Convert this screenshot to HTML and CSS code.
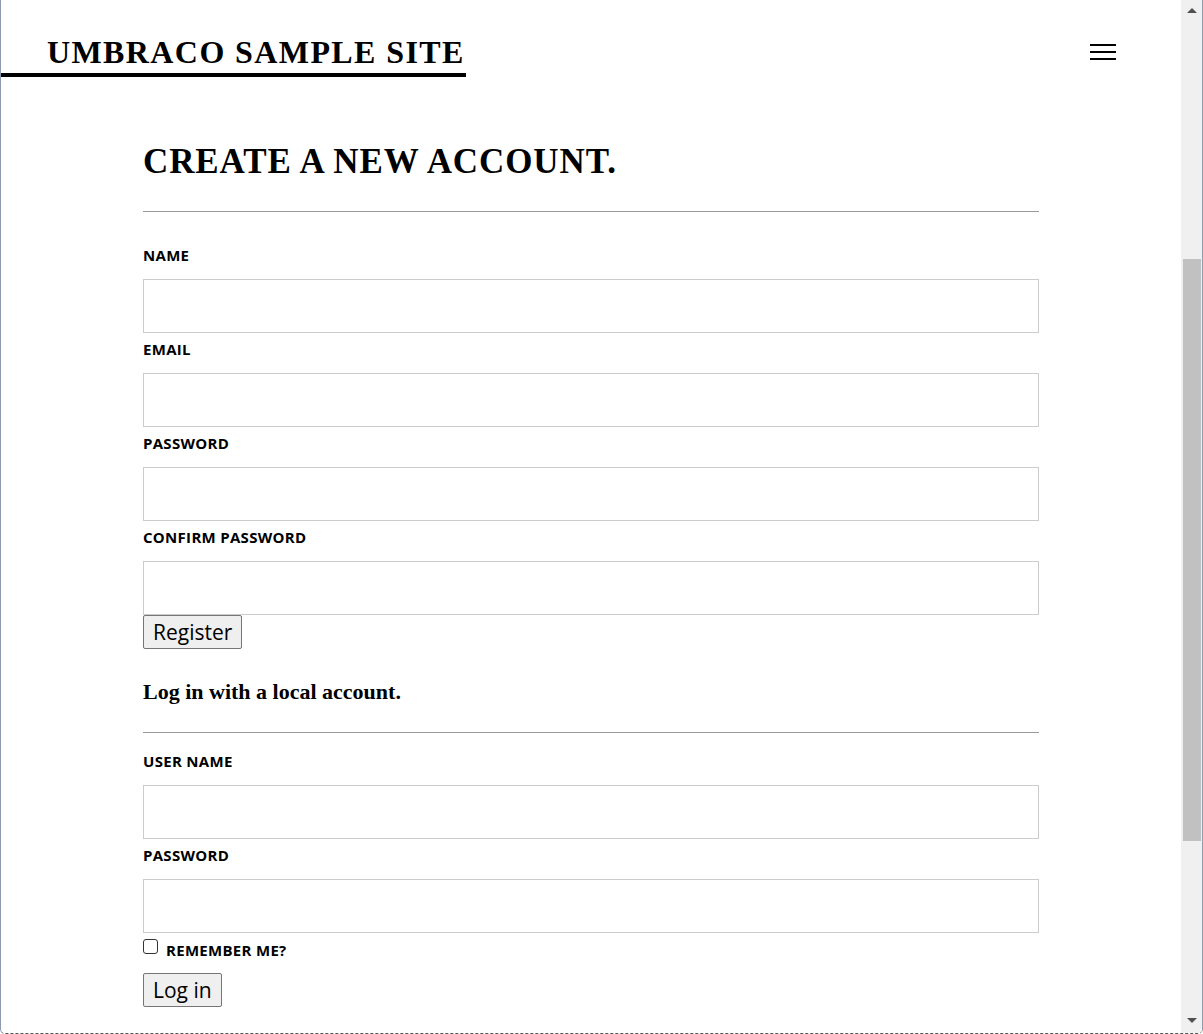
FILE: index.html
```html
<!DOCTYPE html>
<html lang="en">
<head>
<meta charset="utf-8">
<title>Umbraco Sample Site</title>
<link rel="stylesheet" href="styles.css">
</head>
<body>
<div class="window">
  <div class="page">
    <header class="site-header">
      <a class="brand" href="#">UMBRACO SAMPLE SITE</a>
      <button class="menu-toggle" type="button" aria-label="Menu">
        <svg width="26" height="18" viewBox="0 0 26 18"><rect x="0" y="1" width="26" height="2" fill="#000"/><rect x="0" y="8" width="26" height="2" fill="#000"/><rect x="0" y="15" width="26" height="2" fill="#000"/></svg>
      </button>
    </header>
    <main class="content">
      <h1 class="page-title">CREATE A NEW ACCOUNT.</h1>
      <hr class="rule rule-first">
      <form class="form">
        <label class="field-label">NAME</label>
        <input class="field-input" type="text">
        <label class="field-label">EMAIL</label>
        <input class="field-input" type="text">
        <label class="field-label">PASSWORD</label>
        <input class="field-input" type="password">
        <label class="field-label">CONFIRM PASSWORD</label>
        <input class="field-input field-last" type="password">
        <div><button class="btn" type="button">Register</button></div>
      </form>
      <h2 class="sub-title">Log in with a local account.</h2>
      <hr class="rule rule-second">
      <form class="form form-login">
        <label class="field-label">USER NAME</label>
        <input class="field-input" type="text">
        <label class="field-label">PASSWORD</label>
        <input class="field-input" type="password">
        <div class="remember"><input class="check" type="checkbox"><span class="remember-label">REMEMBER ME?</span></div>
        <div><button class="btn btn-login" type="button">Log in</button></div>
      </form>
    </main>
  </div>
  <div class="scrollbar">
    <div class="arrow arrow-up"></div>
    <div class="track"><div class="thumb"></div></div>
    <div class="arrow arrow-down"></div>
  </div>
</div>
</body>
</html>
```

FILE: styles.css
```css
* { box-sizing: border-box; }
html, body { margin: 0; padding: 0; background: #fff; }
body { width: 1203px; height: 1034px; overflow: hidden; }

.window {
  width: 1203px;
  height: 1034px;
  display: flex;
  border-left: 1px solid #8d9cb0;
  border-right: 1px solid #8d9cb0;
  border-bottom: 1px dashed #555;
  border-bottom-left-radius: 5px;
  border-bottom-right-radius: 5px;
  overflow: hidden;
  background: #fff;
}

.page { flex: 1; min-width: 0; overflow: hidden; }

.site-header {
  display: flex;
  justify-content: space-between;
  align-items: flex-start;
  padding-top: 36px;
  padding-right: 65px;
}

.brand {
  display: inline-block;
  font-family: "Liberation Serif", "Times New Roman", serif;
  font-weight: bold;
  font-size: 32px;
  line-height: 33px;
  letter-spacing: 1.4px;
  color: #000;
  text-decoration: none;
  padding-left: 46px;
  padding-right: 1px;
  padding-bottom: 4px;
  border-bottom: 4px solid #000;
}

.menu-toggle {
  margin-top: 7px;
  padding: 0;
  border: 0;
  background: transparent;
  width: 26px;
  height: 18px;
  display: block;
}
.menu-toggle svg { display: block; }

.content {
  width: 1038px;
  padding-left: 142px;
}

.page-title {
  margin: 67px 0 0;
  font-family: "Liberation Serif", "Times New Roman", serif;
  font-weight: bold;
  font-size: 35px;
  line-height: 35px;
  letter-spacing: 0.9px;
  color: #000;
}

.rule {
  border: 0;
  border-top: 1px solid #999;
  height: 0;
  margin: 0;
}
.rule-first { margin-top: 32px; }
.rule-second { margin-top: 29px; }

.form { display: flex; flex-direction: column; margin-top: 33px; }
.form-login { margin-top: 18px; }

.field-label {
  display: block;
  font-family: "Open Sans", "Noto Sans", sans-serif;
  font-weight: bold;
  font-size: 15px;
  line-height: 20px;
  letter-spacing: 0.3px;
  color: #000;
  margin-bottom: 14px;
}

.field-input {
  display: block;
  width: 896px;
  height: 54px;
  border: 1px solid #ccc;
  border-radius: 0;
  margin: 0 0 6px;
  padding: 6px 12px;
  font-size: 16px;
  background: #fff;
}
.field-last { margin-bottom: 0; }

.btn {
  font-family: "Open Sans", "Noto Sans", sans-serif;
  font-size: 21px;
  line-height: 26px;
  height: 34px;
  padding: 0 9px;
  color: #000;
  background: #efefef;
  border: 1px solid #767676;
  border-radius: 2px;
  margin: 0;
}

.sub-title {
  margin: 32px 0 0;
  font-family: "Liberation Serif", "Times New Roman", serif;
  font-weight: bold;
  font-size: 22px;
  line-height: 22px;
  color: #000;
}

.remember {
  display: flex;
  align-items: flex-start;
  margin-bottom: 13px;
}
.check {
  -webkit-appearance: none;
  appearance: none;
  width: 15px;
  height: 15px;
  margin: 0 8px 0 0;
  border: 1px solid #333;
  border-radius: 3px;
  background: #fff;
}
.remember-label {
  margin-top: 1px;
  font-family: "Open Sans", "Noto Sans", sans-serif;
  font-weight: bold;
  font-size: 15px;
  line-height: 20px;
  letter-spacing: 0.3px;
  color: #000;
}

.scrollbar {
  width: 21px;
  flex: none;
  background: #f0f0f0;
  display: flex;
  flex-direction: column;
  align-items: stretch;
}
.arrow { height: 20px; position: relative; flex: none; }
.arrow-up::after, .arrow-down::after {
  content: "";
  position: absolute;
  left: 6px;
  width: 0; height: 0;
  border-left: 5px solid transparent;
  border-right: 5px solid transparent;
}
.arrow-up::after { top: 8px; border-bottom: 5px solid #505050; }
.arrow-down::after { top: 5px; border-top: 5px solid #505050; }
.track { flex: 1; padding-top: 239px; padding-left: 2px; }
.thumb { width: 18px; height: 582px; background: #c1c1c1; }
```
